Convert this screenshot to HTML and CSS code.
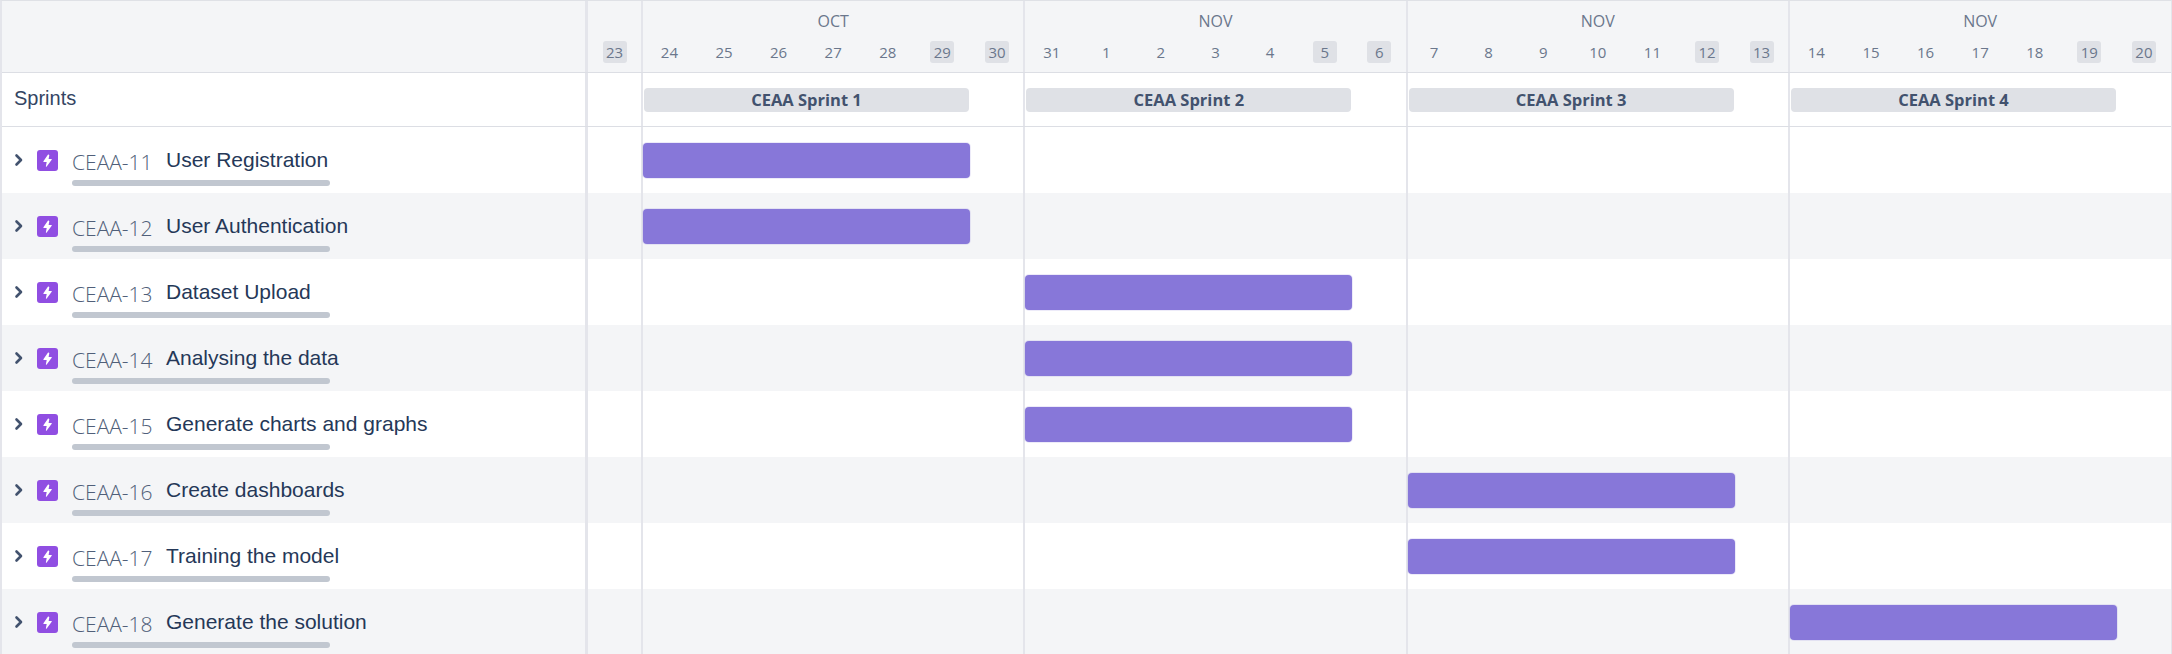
FILE: index.html
```html
<!DOCTYPE html>
<html lang="en">
<head>
    <meta charset="UTF-8">
    <title>Timeline</title>
    <link rel="stylesheet" href="styles.css">
</head>
<body>
<svg class="defs" width="0" height="0">
    <symbol id="chevron" viewBox="0 0 10 14">
        <path d="M2.5 2.5 7 7l-4.5 4.5" fill="none" stroke="#42526e" stroke-width="2.6" stroke-linecap="round" stroke-linejoin="round"/>
    </symbol>
    <symbol id="epic" viewBox="0 0 21 21">
        <rect width="21" height="21" rx="3" fill="#904ee2"/>
        <path d="M11.4 4 6.4 11.2c-.2.4 0 .8.4.8h2.9l-.8 4.2c-.1.5.5.8.8.4l5-6.8c.3-.4 0-.9-.4-.9h-2.7l.7-3.6c.1-.5-.6-.8-.9-.3z" fill="#fff"/>
    </symbol>
</svg>

<div class="chart">
    <div class="line head">
        <div class="side"></div>
        <div class="track">
            <div class="lead"><div class="days"><span class="day off">23</span></div></div>
            <div class="week">
                <div class="month">OCT</div>
                <div class="days">
                    <span class="day">24</span><span class="day">25</span><span class="day">26</span><span class="day">27</span><span class="day">28</span><span class="day off">29</span><span class="day off">30</span>
                </div>
            </div>
            <div class="week">
                <div class="month">NOV</div>
                <div class="days">
                    <span class="day">31</span><span class="day">1</span><span class="day">2</span><span class="day">3</span><span class="day">4</span><span class="day off">5</span><span class="day off">6</span>
                </div>
            </div>
            <div class="week">
                <div class="month">NOV</div>
                <div class="days">
                    <span class="day">7</span><span class="day">8</span><span class="day">9</span><span class="day">10</span><span class="day">11</span><span class="day off">12</span><span class="day off">13</span>
                </div>
            </div>
            <div class="week">
                <div class="month">NOV</div>
                <div class="days">
                    <span class="day">14</span><span class="day">15</span><span class="day">16</span><span class="day">17</span><span class="day">18</span><span class="day off">19</span><span class="day off">20</span>
                </div>
            </div>
        </div>
    </div>

    <div class="line sprints">
        <div class="side">Sprints</div>
        <div class="track">
            <div class="lead"></div>
            <div class="week"><div class="sprint">CEAA Sprint 1</div></div>
            <div class="week"><div class="sprint">CEAA Sprint 2</div></div>
            <div class="week"><div class="sprint">CEAA Sprint 3</div></div>
            <div class="week"><div class="sprint">CEAA Sprint 4</div></div>
        </div>
    </div>

    <div class="line row">
        <div class="side">
            <svg class="chevron"><use href="#chevron"/></svg>
            <svg class="epic"><use href="#epic"/></svg>
            <div class="issue">
                <div class="names"><span class="key">CEAA-11</span><span class="title">User Registration</span></div>
                <div class="progress"></div>
            </div>
        </div>
        <div class="track">
            <div class="lead"></div>
            <div class="week"><div class="bar"></div></div>
            <div class="week"></div>
            <div class="week"></div>
            <div class="week"></div>
        </div>
    </div>

    <div class="line row">
        <div class="side">
            <svg class="chevron"><use href="#chevron"/></svg>
            <svg class="epic"><use href="#epic"/></svg>
            <div class="issue">
                <div class="names"><span class="key">CEAA-12</span><span class="title">User Authentication</span></div>
                <div class="progress"></div>
            </div>
        </div>
        <div class="track">
            <div class="lead"></div>
            <div class="week"><div class="bar"></div></div>
            <div class="week"></div>
            <div class="week"></div>
            <div class="week"></div>
        </div>
    </div>

    <div class="line row">
        <div class="side">
            <svg class="chevron"><use href="#chevron"/></svg>
            <svg class="epic"><use href="#epic"/></svg>
            <div class="issue">
                <div class="names"><span class="key">CEAA-13</span><span class="title">Dataset Upload</span></div>
                <div class="progress"></div>
            </div>
        </div>
        <div class="track">
            <div class="lead"></div>
            <div class="week"></div>
            <div class="week"><div class="bar"></div></div>
            <div class="week"></div>
            <div class="week"></div>
        </div>
    </div>

    <div class="line row">
        <div class="side">
            <svg class="chevron"><use href="#chevron"/></svg>
            <svg class="epic"><use href="#epic"/></svg>
            <div class="issue">
                <div class="names"><span class="key">CEAA-14</span><span class="title">Analysing the data</span></div>
                <div class="progress"></div>
            </div>
        </div>
        <div class="track">
            <div class="lead"></div>
            <div class="week"></div>
            <div class="week"><div class="bar"></div></div>
            <div class="week"></div>
            <div class="week"></div>
        </div>
    </div>

    <div class="line row">
        <div class="side">
            <svg class="chevron"><use href="#chevron"/></svg>
            <svg class="epic"><use href="#epic"/></svg>
            <div class="issue">
                <div class="names"><span class="key">CEAA-15</span><span class="title">Generate charts and graphs</span></div>
                <div class="progress"></div>
            </div>
        </div>
        <div class="track">
            <div class="lead"></div>
            <div class="week"></div>
            <div class="week"><div class="bar"></div></div>
            <div class="week"></div>
            <div class="week"></div>
        </div>
    </div>

    <div class="line row">
        <div class="side">
            <svg class="chevron"><use href="#chevron"/></svg>
            <svg class="epic"><use href="#epic"/></svg>
            <div class="issue">
                <div class="names"><span class="key">CEAA-16</span><span class="title">Create dashboards</span></div>
                <div class="progress"></div>
            </div>
        </div>
        <div class="track">
            <div class="lead"></div>
            <div class="week"></div>
            <div class="week"></div>
            <div class="week"><div class="bar"></div></div>
            <div class="week"></div>
        </div>
    </div>

    <div class="line row">
        <div class="side">
            <svg class="chevron"><use href="#chevron"/></svg>
            <svg class="epic"><use href="#epic"/></svg>
            <div class="issue">
                <div class="names"><span class="key">CEAA-17</span><span class="title">Training the model</span></div>
                <div class="progress"></div>
            </div>
        </div>
        <div class="track">
            <div class="lead"></div>
            <div class="week"></div>
            <div class="week"></div>
            <div class="week"><div class="bar"></div></div>
            <div class="week"></div>
        </div>
    </div>

    <div class="line row">
        <div class="side">
            <svg class="chevron"><use href="#chevron"/></svg>
            <svg class="epic"><use href="#epic"/></svg>
            <div class="issue">
                <div class="names"><span class="key">CEAA-18</span><span class="title">Generate the solution</span></div>
                <div class="progress"></div>
            </div>
        </div>
        <div class="track">
            <div class="lead"></div>
            <div class="week"></div>
            <div class="week"></div>
            <div class="week"></div>
            <div class="week"><div class="bar"></div></div>
        </div>
    </div>
</div>
</body>
</html>
```

FILE: styles.css
```css
* {
    margin: 0;
    padding: 0;
    box-sizing: border-box;
}

html, body {
    height: 654px;
    overflow: hidden;
}

body {
    font-family: 'Open Sans', sans-serif;
    background-color: #fff;
    color: #172b4d;
}

.defs {
    display: block;
    height: 0;
}

.chart {
    border-top: 1px solid #dfe1e6;
    border-left: 2px solid #e4e5eb;
    border-right: 1px solid #e4e5eb;
}

.line {
    display: flex;
}

.side {
    width: 586px;
    flex: none;
    border-right: 3px solid #e4e5eb;
}

.track {
    display: flex;
    flex: 1;
}

.lead {
    width: 53px;
    flex: none;
}

.week {
    width: 382.33px;
    flex: none;
    border-left: 2px solid #e4e5eb;
}

/* header */
.head {
    height: 72px;
    background-color: #f4f5f7;
    border-bottom: 1px solid #dcdee4;
}

.month {
    height: 40px;
    padding-top: 10px;
    text-align: center;
    font-size: 16px;
    line-height: 20px;
    color: #6b778c;
}

.days {
    display: grid;
    grid-template-columns: repeat(7, 54.6px);
    justify-content: center;
    justify-items: center;
}

.lead .days {
    display: flex;
    justify-content: center;
    padding-top: 40px;
}

.day {
    width: 24px;
    height: 22px;
    border-radius: 3px;
    text-align: center;
    font-size: 15px;
    line-height: 23px;
    color: #6b778c;
}

.day.off {
    background-color: #dfe1e6;
}

/* sprints */
.sprints {
    height: 54px;
    border-bottom: 1px solid #dcdee4;
}

.sprints .side {
    padding-left: 12px;
    font-family: 'Liberation Sans', Arial, sans-serif;
    font-size: 20px;
    line-height: 50px;
    color: #344563;
}

.sprint {
    width: 325px;
    height: 24px;
    margin: 15px 0 0 1px;
    border-radius: 4px;
    background-color: #dfe1e6;
    text-align: center;
    font-size: 16.5px;
    font-weight: 700;
    line-height: 24px;
    color: #42526e;
}

/* issue rows */
.row {
    height: 66px;
}

.row:nth-child(even) {
    background-color: #f4f5f7;
}

.row .side {
    display: flex;
    align-items: flex-start;
}

.chevron {
    width: 10px;
    height: 14px;
    margin: 26px 0 0 12px;
    flex: none;
}

.epic {
    width: 21px;
    height: 21px;
    margin: 23px 0 0 13px;
    flex: none;
}

.issue {
    width: 258px;
    margin-left: 14px;
}

.names {
    display: flex;
    align-items: baseline;
    height: 53px;
    padding-top: 20px;
    white-space: nowrap;
}

.key {
    width: 94px;
    flex: none;
    font-size: 21px;
    font-weight: 300;
    line-height: 30px;
    color: #505f79;
}

.title {
    font-family: 'Liberation Sans', Arial, sans-serif;
    font-size: 21px;
    line-height: 26px;
    color: #253858;
    position: relative;
    top: -3px;
}

.progress {
    height: 6px;
    border-radius: 3px;
    background-color: #c1c7d0;
}

.bar {
    width: 327px;
    height: 35px;
    margin-top: 16px;
    border-radius: 4px;
    background-color: #8777d9;
    box-shadow: 0 0 0 1px rgba(135, 119, 217, 0.15);
}
```
